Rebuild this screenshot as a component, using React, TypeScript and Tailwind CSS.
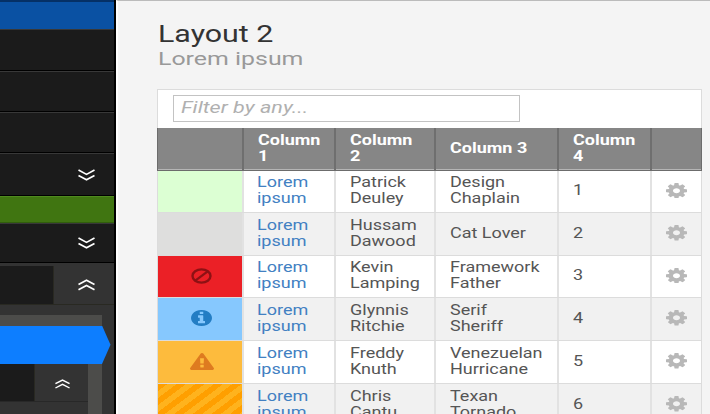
import type { ReactNode } from "react";

const COG =
  "M1152 896q0-106-75-181t-181-75-181 75-75 181 75 181 181 75 181-75 75-181zm512-109v222q0 12-8 23t-20 13l-185 28q-19 54-39 91 35 50 107 138 10 12 10 25t-9 23q-27 37-99 108t-94 71q-12 0-26-9l-138-108q-44 23-91 38-16 136-29 186-7 28-36 28h-222q-14 0-24.5-8.5t-11.5-21.5l-28-184q-49-16-90-37l-141 107q-10 9-25 9-14 0-25-11-126-114-165-168-7-10-7-23 0-12 8-23 15-21 51-66.5t54-70.5q-27-50-41-99l-183-27q-13-2-21-12.5t-8-23.5v-222q0-12 8-23t19-13l186-28q14-46 39-92-40-57-107-138-10-12-10-24 0-10 9-23 26-36 98.5-107.5t94.5-71.5q13 0 26 10l138 107q44-23 91-38 16-136 29-186 7-28 36-28h222q14 0 24.5 8.5t11.5 21.5l28 184q49 16 90 37l142-107q9-9 24-9 13 0 25 10 129 119 165 170 7 8 7 22 0 12-8 23-15 21-51 66.5t-54 70.5q26 50 41 98l183 28q13 2 21 12.5t8 23.5z";
const INFO =
  "M1152 1376v-160q0-14-9-23t-23-9h-96v-512q0-14-9-23t-23-9h-320q-14 0-23 9t-9 23v160q0 14 9 23t23 9h96v320h-96q-14 0-23 9t-9 23v160q0 14 9 23t23 9h448q14 0 23-9t9-23zm-128-896v-160q0-14-9-23t-23-9h-192q-14 0-23 9t-9 23v160q0 14 9 23t23 9h192q14 0 23-9t9-23zm640 416q0 209-103 385.5t-279.5 279.5-385.5 103-385.5-103-279.5-279.5-103-385.5 103-385.5 279.5-279.5 385.5-103 385.5 103 279.5 279.5 103 385.5z";
const WARNING =
  "M1024 1375v-190q0-14-9.5-23.5t-22.5-9.5h-192q-13 0-22.5 9.5t-9.5 23.5v190q0 14 9.5 23.5t22.5 9.5h192q13 0 22.5-9.5t9.5-23.5zm-2-374l18-459q0-12-10-19-13-11-24-11h-220q-11 0-24 11-10 7-10 21l17 457q0 10 10 16.5t24 6.5h185q14 0 23.5-6.5t10.5-16.5zm-14-934l768 1408q35 63-2 126-17 29-46.5 46t-63.5 17h-1536q-34 0-63.5-17t-46.5-46q-37-63-2-126l768-1408q17-31 47-49t65-18 65 18 47 49z";

function Glyph({ d, box, className }: { d: string; box: string; className: string }) {
  return (
    <svg viewBox={box} preserveAspectRatio="none" fill="currentColor" className={className}>
      <path d={d} />
    </svg>
  );
}

function Ban() {
  return (
    <svg viewBox="0 0 21 16" className="h-4 w-[21px] text-[#8e1114]" fill="none" stroke="currentColor">
      <ellipse cx="10.5" cy="8" rx="9" ry="6.6" strokeWidth="2.4" />
      <path d="M4.3 12.6 16.7 3.4" strokeWidth="2.3" />
    </svg>
  );
}

function Chevrons({ up = false, small = false }: { up?: boolean; small?: boolean }) {
  return (
    <svg
      viewBox="0 0 17 12"
      preserveAspectRatio="none"
      fill="none"
      stroke="white"
      strokeWidth="1.7"
      className={small ? "h-[10px] w-[15px]" : "h-3 w-[17px]"}
    >
      <path d={up ? "M.5 5.5 8.5 1.3l8 4.2M.5 10.8l8-4.3 8 4.3" : "M.5 1l8 4.4 8-4.4M.5 6.4l8 4.3 8-4.3"} />
    </svg>
  );
}

function Lines({ lines, className = "" }: { lines: string[]; className?: string }) {
  return (
    <div className={"origin-left scale-x-[1.285] whitespace-nowrap text-[14px] leading-[15.6px] " + className}>
      {lines.map((l) => (
        <div key={l}>{l}</div>
      ))}
    </div>
  );
}

function NavRow({ height, children }: { height: string; children?: ReactNode }) {
  return (
    <div className={"flex items-center justify-end border-t border-b border-t-[#383838] border-b-black bg-[#1b1b1b] pr-[19px] " + height}>
      {children}
    </div>
  );
}

function Sidebar() {
  return (
    <aside className="h-full w-[116px] shrink-0 overflow-hidden border-r-2 border-black bg-[#333]">
      <div className="h-[29px] border-t-2 border-[#053066] bg-[#0a51a3]" />
      <NavRow height="h-[42px]" />
      <NavRow height="h-[41px]" />
      <NavRow height="h-[41px]" />
      <NavRow height="h-[43px]">
        <Chevrons />
      </NavRow>
      <div className="h-[27px] border-t border-b border-t-[#4f8b1e] border-b-[#315d0d] bg-[#407511]" />
      <NavRow height="h-[40px]">
        <Chevrons />
      </NavRow>
      <div className="flex h-[42px] border-b border-[#292922] pt-[3px]">
        <div className="w-[53px] bg-[#1b1b1b]" />
        <div className="flex flex-1 items-center justify-end border-l border-[#292922] pr-[19px]">
          <Chevrons up />
        </div>
      </div>
      <div className="mt-2.5 w-[102px] bg-[#4c4c4a] pt-[10.5px]">
        <div className="h-[38.5px] w-[110.5px] bg-[#0d7eff] [clip-path:polygon(0_0,102px_0,110.5px_50%,102px_100%,0_100%)]" />
        <div className="h-[60px] w-[88px] bg-[#333]">
          <div className="flex h-[38px] border-b border-[#282828]">
            <div className="w-[34px] bg-[#1b1b1b]" />
            <div className="flex flex-1 items-center justify-end border-l border-[#292922] pt-[3px] pr-[18px]">
              <Chevrons up small />
            </div>
          </div>
        </div>
      </div>
    </aside>
  );
}

type Row = {
  h: string;
  status: string;
  icon?: ReactNode;
  name: string[];
  role: string[];
};

const ROWS: Row[] = [
  { h: "h-[42px]", status: "bg-[#dcffd3]", name: ["Patrick", "Deuley"], role: ["Design", "Chaplain"] },
  { h: "h-[43px]", status: "bg-[#dededd]", name: ["Hussam", "Dawood"], role: ["Cat Lover"] },
  { h: "h-[42px]", status: "bg-[#eb2026]", icon: <Ban />, name: ["Kevin", "Lamping"], role: ["Framework", "Father"] },
  {
    h: "h-[43px]",
    status: "bg-[#86c8fe]",
    icon: <Glyph d={INFO} box="128 128 1536 1536" className="h-4 w-[21px] text-[#237dc4]" />,
    name: ["Glynnis", "Ritchie"],
    role: ["Serif", "Sheriff"],
  },
  {
    h: "h-[43px]",
    status: "bg-[#fdbb3d]",
    icon: <Glyph d={WARNING} box="0 0 1792 1664" className="h-[17px] w-6 text-[#de7b20]" />,
    name: ["Freddy", "Knuth"],
    role: ["Venezuelan", "Hurricane"],
  },
  {
    h: "h-[43px]",
    status: "bg-[repeating-linear-gradient(143deg,#ff9f00_0px,#ff9f00_5.6px,#ffb31d_5.6px,#ffb31d_11.2px)]",
    name: ["Chris", "Cantu"],
    role: ["Texan", "Tornado"],
  },
];

function Table() {
  const head = "flex items-center border-r-2 border-[#6f6f6f] pl-[14px] font-bold text-white";
  const cell = "flex items-center border-r-2 border-[#e2e2e2] pb-px pl-[14px]";
  return (
    <div className="w-[545px] border-x border-t border-[#dcdcdc] bg-white">
      <div className="flex h-[38px] pt-[5px] pl-[15px]">
        <div className="flex h-[27px] w-[347px] items-center border border-[#c3c3c3] pb-0.5 pl-[7px]">
          <span className="origin-left scale-x-[1.27] text-[17px] text-[#b0b0b0] italic">Filter by any...</span>
        </div>
      </div>
      <div className="-mx-px grid h-[43px] grid-cols-[86px_92px_100px_123px_93px_51px] border-x border-b border-[#6c6c6c] bg-[#868686] shadow-[inset_0_-1px_0_#b5b5b5]">
        <div className={head} />
        <div className={head + " pl-[13px]"}><Lines lines={["Column", "1"]} /></div>
        <div className={head}><Lines lines={["Column", "2"]} /></div>
        <div className={head}><Lines lines={["Column 3"]} /></div>
        <div className={head}><Lines lines={["Column", "4"]} /></div>
        <div />
      </div>
      {ROWS.map((r, i) => (
        <div
          key={i}
          className={
            (i % 2 ? "bg-[#f1f1f1] " : "bg-white ") +
            r.h +
            " grid grid-cols-[86px_92px_100px_123px_93px_49px] border-b border-[#dcdcdc] text-[#555]"
          }
        >
          <div className={"flex items-center justify-center border-r-2 border-[#e2e2e2] bg-clip-padding pb-0.5 pl-[3px] " + r.status}>{r.icon}</div>
          <div className={cell}><Lines lines={["Lorem", "ipsum"]} className="-ml-px text-[#4280c2]" /></div>
          <div className={cell}><Lines lines={r.name} /></div>
          <div className={cell}><Lines lines={r.role} /></div>
          <div className={cell}><Lines lines={[String(i + 1)]} /></div>
          <div className="flex items-center justify-center pb-0.5">
            <Glyph d={COG} box="128 128 1536 1536" className="h-[15.5px] w-[21px] text-[#b8b8b8]" />
          </div>
        </div>
      ))}
    </div>
  );
}

export default function App() {
  return (
    <div className="flex h-[414px] w-[710px] overflow-hidden bg-[#f4f4f4] font-['Roboto','Liberation_Sans',sans-serif]">
      <Sidebar />
      <main className="h-full flex-1 overflow-hidden border-t border-l-2 border-t-[#bbb] border-l-white pl-[39px]">
        <h1 className="mt-[21px] ml-px origin-left scale-x-[1.32] text-[23px] leading-[25px] whitespace-nowrap text-[#333]">Layout 2</h1>
        <h2 className="ml-px origin-left scale-x-[1.31] text-[19px] leading-[24px] whitespace-nowrap text-[#999]">Lorem ipsum</h2>
        <div className="mt-[18px]">
          <Table />
        </div>
      </main>
    </div>
  );
}
